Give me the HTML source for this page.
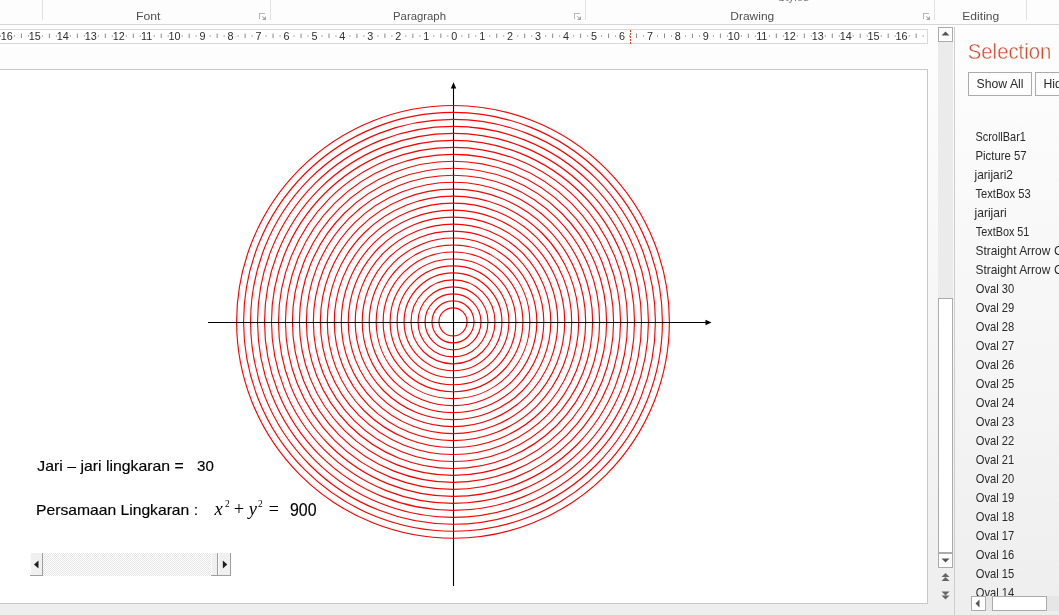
<!DOCTYPE html>
<html><head><meta charset="utf-8"><title>Selection</title>
<style>html,body{margin:0;padding:0;width:1059px;height:615px;overflow:hidden;background:#f5f5f5;font-family:"Liberation Sans",sans-serif;}</style>
</head><body>
<svg width="1059" height="615" viewBox="0 0 1059 615" style="display:block;will-change:transform"><defs><linearGradient id="bg" x1="0" y1="0" x2="0" y2="1"><stop offset="0" stop-color="#fefefe"/><stop offset="0.15" stop-color="#fcfcfc"/><stop offset="0.6" stop-color="#f5f5f5"/><stop offset="1" stop-color="#eeeeee"/></linearGradient></defs>
<rect x="0" y="0" width="1059" height="615" fill="url(#bg)"/>
<rect x="0" y="0" width="1059" height="24" fill="#fdfdfd"/>
<rect x="0" y="24" width="1059" height="1" fill="#d6d6d6"/>
<rect x="42" y="0" width="1" height="20" fill="#e2e2e2"/>
<rect x="270" y="0" width="1" height="20" fill="#e2e2e2"/>
<rect x="585" y="0" width="1" height="20" fill="#e2e2e2"/>
<rect x="934" y="0" width="1" height="20" fill="#e2e2e2"/>
<rect x="1026" y="0" width="1" height="20" fill="#e2e2e2"/>
<text x="136.00" y="20.00" font-family='"Liberation Sans", sans-serif' font-size="11.80" fill="#4f4f4f" text-anchor="start" textLength="24.50" lengthAdjust="spacingAndGlyphs">Font</text>
<text x="393.00" y="20.00" font-family='"Liberation Sans", sans-serif' font-size="11.80" fill="#4f4f4f" text-anchor="start" textLength="53.00" lengthAdjust="spacingAndGlyphs">Paragraph</text>
<text x="730.30" y="20.00" font-family='"Liberation Sans", sans-serif' font-size="11.80" fill="#4f4f4f" text-anchor="start" textLength="44.00" lengthAdjust="spacingAndGlyphs">Drawing</text>
<text x="962.30" y="20.00" font-family='"Liberation Sans", sans-serif' font-size="11.80" fill="#4f4f4f" text-anchor="start" textLength="37.00" lengthAdjust="spacingAndGlyphs">Editing</text>
<text x="777.50" y="1.00" font-family='"Liberation Sans", sans-serif' font-size="11.80" fill="#7a7a7a" text-anchor="start" textLength="31.50" lengthAdjust="spacingAndGlyphs">Styles</text>
<rect x="259" y="13" width="6" height="1" fill="#b8b8b8"/>
<rect x="259" y="13" width="1" height="6" fill="#b8b8b8"/>
<path d="M266 16 L266 20 L262 20 Z" fill="#a8a8a8"/>
<rect x="262" y="16" width="1" height="1" fill="#b8b8b8"/>
<rect x="263" y="17" width="1" height="1" fill="#b0b0b0"/>
<rect x="574" y="13" width="6" height="1" fill="#b8b8b8"/>
<rect x="574" y="13" width="1" height="6" fill="#b8b8b8"/>
<path d="M581 16 L581 20 L577 20 Z" fill="#a8a8a8"/>
<rect x="577" y="16" width="1" height="1" fill="#b8b8b8"/>
<rect x="578" y="17" width="1" height="1" fill="#b0b0b0"/>
<rect x="923" y="13" width="6" height="1" fill="#b8b8b8"/>
<rect x="923" y="13" width="1" height="6" fill="#b8b8b8"/>
<path d="M930 16 L930 20 L926 20 Z" fill="#a8a8a8"/>
<rect x="926" y="16" width="1" height="1" fill="#b8b8b8"/>
<rect x="927" y="17" width="1" height="1" fill="#b0b0b0"/>
<rect x="-1.5" y="29.5" width="929" height="14" fill="#ffffff" stroke="#d8d8d8" stroke-width="1"/>
<text x="6.84" y="40" font-family='"Liberation Sans", sans-serif' font-size="10.8" fill="#2e2e2e" text-anchor="middle">16</text>
<text x="34.80" y="40" font-family='"Liberation Sans", sans-serif' font-size="10.8" fill="#2e2e2e" text-anchor="middle">15</text>
<text x="62.76" y="40" font-family='"Liberation Sans", sans-serif' font-size="10.8" fill="#2e2e2e" text-anchor="middle">14</text>
<text x="90.72" y="40" font-family='"Liberation Sans", sans-serif' font-size="10.8" fill="#2e2e2e" text-anchor="middle">13</text>
<text x="118.68" y="40" font-family='"Liberation Sans", sans-serif' font-size="10.8" fill="#2e2e2e" text-anchor="middle">12</text>
<text x="146.64" y="40" font-family='"Liberation Sans", sans-serif' font-size="10.8" fill="#2e2e2e" text-anchor="middle">11</text>
<text x="174.60" y="40" font-family='"Liberation Sans", sans-serif' font-size="10.8" fill="#2e2e2e" text-anchor="middle">10</text>
<text x="202.56" y="40" font-family='"Liberation Sans", sans-serif' font-size="10.8" fill="#2e2e2e" text-anchor="middle">9</text>
<text x="230.52" y="40" font-family='"Liberation Sans", sans-serif' font-size="10.8" fill="#2e2e2e" text-anchor="middle">8</text>
<text x="258.48" y="40" font-family='"Liberation Sans", sans-serif' font-size="10.8" fill="#2e2e2e" text-anchor="middle">7</text>
<text x="286.44" y="40" font-family='"Liberation Sans", sans-serif' font-size="10.8" fill="#2e2e2e" text-anchor="middle">6</text>
<text x="314.40" y="40" font-family='"Liberation Sans", sans-serif' font-size="10.8" fill="#2e2e2e" text-anchor="middle">5</text>
<text x="342.36" y="40" font-family='"Liberation Sans", sans-serif' font-size="10.8" fill="#2e2e2e" text-anchor="middle">4</text>
<text x="370.32" y="40" font-family='"Liberation Sans", sans-serif' font-size="10.8" fill="#2e2e2e" text-anchor="middle">3</text>
<text x="398.28" y="40" font-family='"Liberation Sans", sans-serif' font-size="10.8" fill="#2e2e2e" text-anchor="middle">2</text>
<text x="426.24" y="40" font-family='"Liberation Sans", sans-serif' font-size="10.8" fill="#2e2e2e" text-anchor="middle">1</text>
<text x="454.20" y="40" font-family='"Liberation Sans", sans-serif' font-size="10.8" fill="#2e2e2e" text-anchor="middle">0</text>
<text x="482.16" y="40" font-family='"Liberation Sans", sans-serif' font-size="10.8" fill="#2e2e2e" text-anchor="middle">1</text>
<text x="510.12" y="40" font-family='"Liberation Sans", sans-serif' font-size="10.8" fill="#2e2e2e" text-anchor="middle">2</text>
<text x="538.08" y="40" font-family='"Liberation Sans", sans-serif' font-size="10.8" fill="#2e2e2e" text-anchor="middle">3</text>
<text x="566.04" y="40" font-family='"Liberation Sans", sans-serif' font-size="10.8" fill="#2e2e2e" text-anchor="middle">4</text>
<text x="594.00" y="40" font-family='"Liberation Sans", sans-serif' font-size="10.8" fill="#2e2e2e" text-anchor="middle">5</text>
<text x="621.96" y="40" font-family='"Liberation Sans", sans-serif' font-size="10.8" fill="#2e2e2e" text-anchor="middle">6</text>
<text x="649.92" y="40" font-family='"Liberation Sans", sans-serif' font-size="10.8" fill="#2e2e2e" text-anchor="middle">7</text>
<text x="677.88" y="40" font-family='"Liberation Sans", sans-serif' font-size="10.8" fill="#2e2e2e" text-anchor="middle">8</text>
<text x="705.84" y="40" font-family='"Liberation Sans", sans-serif' font-size="10.8" fill="#2e2e2e" text-anchor="middle">9</text>
<text x="733.80" y="40" font-family='"Liberation Sans", sans-serif' font-size="10.8" fill="#2e2e2e" text-anchor="middle">10</text>
<text x="761.76" y="40" font-family='"Liberation Sans", sans-serif' font-size="10.8" fill="#2e2e2e" text-anchor="middle">11</text>
<text x="789.72" y="40" font-family='"Liberation Sans", sans-serif' font-size="10.8" fill="#2e2e2e" text-anchor="middle">12</text>
<text x="817.68" y="40" font-family='"Liberation Sans", sans-serif' font-size="10.8" fill="#2e2e2e" text-anchor="middle">13</text>
<text x="845.64" y="40" font-family='"Liberation Sans", sans-serif' font-size="10.8" fill="#2e2e2e" text-anchor="middle">14</text>
<text x="873.60" y="40" font-family='"Liberation Sans", sans-serif' font-size="10.8" fill="#2e2e2e" text-anchor="middle">15</text>
<text x="901.56" y="40" font-family='"Liberation Sans", sans-serif' font-size="10.8" fill="#2e2e2e" text-anchor="middle">16</text>
<rect x="-0.05" y="35" width="1" height="2" fill="#b0b0b0"/>
<rect x="13.93" y="35" width="1" height="2" fill="#b0b0b0"/>
<rect x="20.92" y="33.5" width="1" height="4.5" fill="#8a8a8a"/>
<rect x="27.91" y="35" width="1" height="2" fill="#b0b0b0"/>
<rect x="41.89" y="35" width="1" height="2" fill="#b0b0b0"/>
<rect x="48.88" y="33.5" width="1" height="4.5" fill="#8a8a8a"/>
<rect x="55.87" y="35" width="1" height="2" fill="#b0b0b0"/>
<rect x="69.85" y="35" width="1" height="2" fill="#b0b0b0"/>
<rect x="76.84" y="33.5" width="1" height="4.5" fill="#8a8a8a"/>
<rect x="83.83" y="35" width="1" height="2" fill="#b0b0b0"/>
<rect x="97.81" y="35" width="1" height="2" fill="#b0b0b0"/>
<rect x="104.80" y="33.5" width="1" height="4.5" fill="#8a8a8a"/>
<rect x="111.79" y="35" width="1" height="2" fill="#b0b0b0"/>
<rect x="125.77" y="35" width="1" height="2" fill="#b0b0b0"/>
<rect x="132.76" y="33.5" width="1" height="4.5" fill="#8a8a8a"/>
<rect x="139.75" y="35" width="1" height="2" fill="#b0b0b0"/>
<rect x="153.73" y="35" width="1" height="2" fill="#b0b0b0"/>
<rect x="160.72" y="33.5" width="1" height="4.5" fill="#8a8a8a"/>
<rect x="167.71" y="35" width="1" height="2" fill="#b0b0b0"/>
<rect x="181.69" y="35" width="1" height="2" fill="#b0b0b0"/>
<rect x="188.68" y="33.5" width="1" height="4.5" fill="#8a8a8a"/>
<rect x="195.67" y="35" width="1" height="2" fill="#b0b0b0"/>
<rect x="209.65" y="35" width="1" height="2" fill="#b0b0b0"/>
<rect x="216.64" y="33.5" width="1" height="4.5" fill="#8a8a8a"/>
<rect x="223.63" y="35" width="1" height="2" fill="#b0b0b0"/>
<rect x="237.61" y="35" width="1" height="2" fill="#b0b0b0"/>
<rect x="244.60" y="33.5" width="1" height="4.5" fill="#8a8a8a"/>
<rect x="251.59" y="35" width="1" height="2" fill="#b0b0b0"/>
<rect x="265.57" y="35" width="1" height="2" fill="#b0b0b0"/>
<rect x="272.56" y="33.5" width="1" height="4.5" fill="#8a8a8a"/>
<rect x="279.55" y="35" width="1" height="2" fill="#b0b0b0"/>
<rect x="293.53" y="35" width="1" height="2" fill="#b0b0b0"/>
<rect x="300.52" y="33.5" width="1" height="4.5" fill="#8a8a8a"/>
<rect x="307.51" y="35" width="1" height="2" fill="#b0b0b0"/>
<rect x="321.49" y="35" width="1" height="2" fill="#b0b0b0"/>
<rect x="328.48" y="33.5" width="1" height="4.5" fill="#8a8a8a"/>
<rect x="335.47" y="35" width="1" height="2" fill="#b0b0b0"/>
<rect x="349.45" y="35" width="1" height="2" fill="#b0b0b0"/>
<rect x="356.44" y="33.5" width="1" height="4.5" fill="#8a8a8a"/>
<rect x="363.43" y="35" width="1" height="2" fill="#b0b0b0"/>
<rect x="377.41" y="35" width="1" height="2" fill="#b0b0b0"/>
<rect x="384.40" y="33.5" width="1" height="4.5" fill="#8a8a8a"/>
<rect x="391.39" y="35" width="1" height="2" fill="#b0b0b0"/>
<rect x="405.37" y="35" width="1" height="2" fill="#b0b0b0"/>
<rect x="412.36" y="33.5" width="1" height="4.5" fill="#8a8a8a"/>
<rect x="419.35" y="35" width="1" height="2" fill="#b0b0b0"/>
<rect x="433.33" y="35" width="1" height="2" fill="#b0b0b0"/>
<rect x="440.32" y="33.5" width="1" height="4.5" fill="#8a8a8a"/>
<rect x="447.31" y="35" width="1" height="2" fill="#b0b0b0"/>
<rect x="461.29" y="35" width="1" height="2" fill="#b0b0b0"/>
<rect x="468.28" y="33.5" width="1" height="4.5" fill="#8a8a8a"/>
<rect x="475.27" y="35" width="1" height="2" fill="#b0b0b0"/>
<rect x="489.25" y="35" width="1" height="2" fill="#b0b0b0"/>
<rect x="496.24" y="33.5" width="1" height="4.5" fill="#8a8a8a"/>
<rect x="503.23" y="35" width="1" height="2" fill="#b0b0b0"/>
<rect x="517.21" y="35" width="1" height="2" fill="#b0b0b0"/>
<rect x="524.20" y="33.5" width="1" height="4.5" fill="#8a8a8a"/>
<rect x="531.19" y="35" width="1" height="2" fill="#b0b0b0"/>
<rect x="545.17" y="35" width="1" height="2" fill="#b0b0b0"/>
<rect x="552.16" y="33.5" width="1" height="4.5" fill="#8a8a8a"/>
<rect x="559.15" y="35" width="1" height="2" fill="#b0b0b0"/>
<rect x="573.13" y="35" width="1" height="2" fill="#b0b0b0"/>
<rect x="580.12" y="33.5" width="1" height="4.5" fill="#8a8a8a"/>
<rect x="587.11" y="35" width="1" height="2" fill="#b0b0b0"/>
<rect x="601.09" y="35" width="1" height="2" fill="#b0b0b0"/>
<rect x="608.08" y="33.5" width="1" height="4.5" fill="#8a8a8a"/>
<rect x="615.07" y="35" width="1" height="2" fill="#b0b0b0"/>
<rect x="629.05" y="35" width="1" height="2" fill="#b0b0b0"/>
<rect x="636.04" y="33.5" width="1" height="4.5" fill="#8a8a8a"/>
<rect x="643.03" y="35" width="1" height="2" fill="#b0b0b0"/>
<rect x="657.01" y="35" width="1" height="2" fill="#b0b0b0"/>
<rect x="664.00" y="33.5" width="1" height="4.5" fill="#8a8a8a"/>
<rect x="670.99" y="35" width="1" height="2" fill="#b0b0b0"/>
<rect x="684.97" y="35" width="1" height="2" fill="#b0b0b0"/>
<rect x="691.96" y="33.5" width="1" height="4.5" fill="#8a8a8a"/>
<rect x="698.95" y="35" width="1" height="2" fill="#b0b0b0"/>
<rect x="712.93" y="35" width="1" height="2" fill="#b0b0b0"/>
<rect x="719.92" y="33.5" width="1" height="4.5" fill="#8a8a8a"/>
<rect x="726.91" y="35" width="1" height="2" fill="#b0b0b0"/>
<rect x="740.89" y="35" width="1" height="2" fill="#b0b0b0"/>
<rect x="747.88" y="33.5" width="1" height="4.5" fill="#8a8a8a"/>
<rect x="754.87" y="35" width="1" height="2" fill="#b0b0b0"/>
<rect x="768.85" y="35" width="1" height="2" fill="#b0b0b0"/>
<rect x="775.84" y="33.5" width="1" height="4.5" fill="#8a8a8a"/>
<rect x="782.83" y="35" width="1" height="2" fill="#b0b0b0"/>
<rect x="796.81" y="35" width="1" height="2" fill="#b0b0b0"/>
<rect x="803.80" y="33.5" width="1" height="4.5" fill="#8a8a8a"/>
<rect x="810.79" y="35" width="1" height="2" fill="#b0b0b0"/>
<rect x="824.77" y="35" width="1" height="2" fill="#b0b0b0"/>
<rect x="831.76" y="33.5" width="1" height="4.5" fill="#8a8a8a"/>
<rect x="838.75" y="35" width="1" height="2" fill="#b0b0b0"/>
<rect x="852.73" y="35" width="1" height="2" fill="#b0b0b0"/>
<rect x="859.72" y="33.5" width="1" height="4.5" fill="#8a8a8a"/>
<rect x="866.71" y="35" width="1" height="2" fill="#b0b0b0"/>
<rect x="880.69" y="35" width="1" height="2" fill="#b0b0b0"/>
<rect x="887.68" y="33.5" width="1" height="4.5" fill="#8a8a8a"/>
<rect x="894.67" y="35" width="1" height="2" fill="#b0b0b0"/>
<rect x="908.65" y="35" width="1" height="2" fill="#b0b0b0"/>
<rect x="915.64" y="33.5" width="1" height="4.5" fill="#8a8a8a"/>
<rect x="922.63" y="35" width="1" height="2" fill="#b0b0b0"/>
<rect x="630" y="30" width="1" height="2" fill="#e0461e"/>
<rect x="630" y="33" width="1" height="2" fill="#e0461e"/>
<rect x="630" y="36" width="1" height="2" fill="#e0461e"/>
<rect x="630" y="39" width="1" height="2" fill="#e0461e"/>
<rect x="630" y="42" width="1" height="2" fill="#e0461e"/>
<rect x="-2.5" y="69.5" width="930" height="534" fill="#ffffff" stroke="#c8c8c8" stroke-width="1"/>
<circle cx="453.00" cy="321.85" r="14.05" fill="none" stroke="#ff0000" stroke-width="1.15"/>
<circle cx="453.00" cy="321.85" r="21.03" fill="none" stroke="#ff0000" stroke-width="1.15"/>
<circle cx="453.00" cy="321.85" r="28.00" fill="none" stroke="#ff0000" stroke-width="1.15"/>
<circle cx="453.00" cy="321.85" r="34.98" fill="none" stroke="#ff0000" stroke-width="1.15"/>
<circle cx="453.00" cy="321.85" r="41.96" fill="none" stroke="#ff0000" stroke-width="1.15"/>
<circle cx="453.00" cy="321.85" r="48.94" fill="none" stroke="#ff0000" stroke-width="1.15"/>
<circle cx="453.00" cy="321.85" r="55.91" fill="none" stroke="#ff0000" stroke-width="1.15"/>
<circle cx="453.00" cy="321.85" r="62.89" fill="none" stroke="#ff0000" stroke-width="1.15"/>
<circle cx="453.00" cy="321.85" r="69.87" fill="none" stroke="#ff0000" stroke-width="1.15"/>
<circle cx="453.00" cy="321.85" r="76.84" fill="none" stroke="#ff0000" stroke-width="1.15"/>
<circle cx="453.00" cy="321.85" r="83.82" fill="none" stroke="#ff0000" stroke-width="1.15"/>
<circle cx="453.00" cy="321.85" r="90.80" fill="none" stroke="#ff0000" stroke-width="1.15"/>
<circle cx="453.00" cy="321.85" r="97.77" fill="none" stroke="#ff0000" stroke-width="1.15"/>
<circle cx="453.00" cy="321.85" r="104.75" fill="none" stroke="#ff0000" stroke-width="1.15"/>
<circle cx="453.00" cy="321.85" r="111.73" fill="none" stroke="#ff0000" stroke-width="1.15"/>
<circle cx="453.00" cy="321.85" r="118.70" fill="none" stroke="#ff0000" stroke-width="1.15"/>
<circle cx="453.00" cy="321.85" r="125.68" fill="none" stroke="#ff0000" stroke-width="1.15"/>
<circle cx="453.00" cy="321.85" r="132.66" fill="none" stroke="#ff0000" stroke-width="1.15"/>
<circle cx="453.00" cy="321.85" r="139.64" fill="none" stroke="#ff0000" stroke-width="1.15"/>
<circle cx="453.00" cy="321.85" r="146.61" fill="none" stroke="#ff0000" stroke-width="1.15"/>
<circle cx="453.00" cy="321.85" r="153.59" fill="none" stroke="#ff0000" stroke-width="1.15"/>
<circle cx="453.00" cy="321.85" r="160.57" fill="none" stroke="#ff0000" stroke-width="1.15"/>
<circle cx="453.00" cy="321.85" r="167.54" fill="none" stroke="#ff0000" stroke-width="1.15"/>
<circle cx="453.00" cy="321.85" r="174.52" fill="none" stroke="#ff0000" stroke-width="1.15"/>
<circle cx="453.00" cy="321.85" r="181.50" fill="none" stroke="#ff0000" stroke-width="1.15"/>
<circle cx="453.00" cy="321.85" r="188.48" fill="none" stroke="#ff0000" stroke-width="1.15"/>
<circle cx="453.00" cy="321.85" r="195.45" fill="none" stroke="#ff0000" stroke-width="1.15"/>
<circle cx="453.00" cy="321.85" r="202.43" fill="none" stroke="#ff0000" stroke-width="1.15"/>
<circle cx="453.00" cy="321.85" r="209.41" fill="none" stroke="#ff0000" stroke-width="1.15"/>
<circle cx="453.00" cy="321.85" r="216.38" fill="none" stroke="#ff0000" stroke-width="1.15"/>
<line x1="453.5" y1="87" x2="453.5" y2="586" stroke="#000" stroke-width="1.1"/>
<path d="M453.5 82.3 L450.8 88.5 L456.2 88.5 Z" fill="#000"/>
<line x1="208" y1="322.5" x2="707" y2="322.5" stroke="#000" stroke-width="1.1"/>
<path d="M711.5 322.5 L705.5 319.8 L705.5 325.2 Z" fill="#000"/>
<text x="37.30" y="470.80" font-family='"Liberation Sans", sans-serif' font-size="14.50" fill="#000000" text-anchor="start" stroke="#000000" stroke-width="0.15" textLength="146.50" lengthAdjust="spacingAndGlyphs">Jari – jari lingkaran =</text>
<text x="197.00" y="470.80" font-family='"Liberation Sans", sans-serif' font-size="14.50" fill="#000000" text-anchor="start" stroke="#000000" stroke-width="0.15" textLength="16.80" lengthAdjust="spacingAndGlyphs">30</text>
<text x="36.00" y="514.80" font-family='"Liberation Sans", sans-serif' font-size="14.50" fill="#000000" text-anchor="start" stroke="#000000" stroke-width="0.15" textLength="162.00" lengthAdjust="spacingAndGlyphs">Persamaan Lingkaran :</text>
<text x="214.50" y="514.60" font-family='"Liberation Serif", serif' font-size="18.50" fill="#000000" text-anchor="start" font-style="italic">x</text>
<text x="225.00" y="506.60" font-family='"Liberation Serif", serif' font-size="9.50" fill="#000000" text-anchor="start">2</text>
<text x="233.80" y="515.20" font-family='"Liberation Serif", serif' font-size="18.50" fill="#000000" text-anchor="start">+</text>
<text x="248.80" y="514.60" font-family='"Liberation Serif", serif' font-size="18.50" fill="#000000" text-anchor="start" font-style="italic">y</text>
<text x="258.00" y="506.60" font-family='"Liberation Serif", serif' font-size="9.50" fill="#000000" text-anchor="start">2</text>
<text x="268.80" y="515.00" font-family='"Liberation Serif", serif' font-size="18.00" fill="#000000" text-anchor="start">=</text>
<text x="290.00" y="515.80" font-family='"Liberation Sans", sans-serif' font-size="17.50" fill="#000000" text-anchor="start" stroke="#000000" stroke-width="0.15" textLength="26.50" lengthAdjust="spacingAndGlyphs">900</text>
<pattern id="chk" x="0" y="0" width="2" height="2" patternUnits="userSpaceOnUse"><rect width="2" height="2" fill="#ffffff"/><rect x="0" y="0" width="1" height="1" fill="#e6e6e6"/><rect x="1" y="1" width="1" height="1" fill="#e6e6e6"/></pattern>
<rect x="43" y="553" width="168" height="23" fill="url(#chk)"/>
<rect x="30" y="553" width="13" height="23" fill="#f0f0f0"/>
<rect x="30" y="553" width="1" height="22" fill="#fbfbfb"/>
<rect x="42" y="553" width="1" height="23" fill="#a0a0a0"/>
<rect x="30" y="575" width="13" height="1" fill="#a0a0a0"/>
<rect x="211" y="553" width="7" height="23" fill="#f0f0f0"/>
<rect x="211" y="553" width="1" height="22" fill="#fbfbfb"/>
<rect x="217" y="553" width="1" height="23" fill="#a0a0a0"/>
<rect x="211" y="575" width="7" height="1" fill="#a0a0a0"/>
<rect x="218" y="553" width="13" height="23" fill="#f0f0f0"/>
<rect x="218" y="553" width="1" height="22" fill="#fbfbfb"/>
<rect x="230" y="553" width="1" height="23" fill="#a0a0a0"/>
<rect x="218" y="575" width="13" height="1" fill="#a0a0a0"/>
<path d="M34 564.5 L38.5 560.5 L38.5 568.5 Z" fill="#1e1e1e"/>
<path d="M227.3 564.5 L222.8 560.5 L222.8 568.5 Z" fill="#1e1e1e"/>
<rect x="938" y="27" width="15" height="541" fill="#ebebeb"/>
<rect x="938.5" y="27.5" width="14.0" height="14.0" fill="#ffffff" stroke="#ababab" stroke-width="1"/>
<path d="M945.5 31.5 L941.5 35.5 L949.5 35.5 Z" fill="#555"/>
<rect x="938.5" y="298.5" width="14.0" height="254.0" fill="#ffffff" stroke="#ababab" stroke-width="1"/>
<rect x="938.5" y="553.5" width="14.0" height="14.0" fill="#ffffff" stroke="#ababab" stroke-width="1"/>
<path d="M941.5 558.5 L949.5 558.5 L945.5 562.5 Z" fill="#555"/>
<path d="M945.5 573 L941.5 577 L949.5 577 Z M945.5 577 L941.5 581 L949.5 581 Z" fill="#666"/>
<path d="M941.5 591.5 L949.5 591.5 L945.5 595.5 Z M941.5 595.5 L949.5 595.5 L945.5 599.5 Z" fill="#666"/>
<rect x="954" y="27" width="1" height="588" fill="#cdcdcd"/>
<text x="967.8" y="58.9" font-family='"Liberation Sans", sans-serif' font-size="22" fill="#d54a2a" stroke="#fbfbfb" stroke-width="0.4" textLength="83.5" lengthAdjust="spacingAndGlyphs">Selection</text>
<rect x="968.5" y="72.5" width="63.0" height="23.0" fill="#fdfdfd" stroke="#ababab" stroke-width="1"/>
<text x="976.50" y="87.80" font-family='"Liberation Sans", sans-serif' font-size="12.20" fill="#2a2a2a" text-anchor="start" textLength="47.00" lengthAdjust="spacingAndGlyphs">Show All</text>
<rect x="1035.5" y="72.5" width="39.0" height="23.0" fill="#fdfdfd" stroke="#ababab" stroke-width="1"/>
<text x="1043.50" y="87.80" font-family='"Liberation Sans", sans-serif' font-size="12.20" fill="#2a2a2a" text-anchor="start">Hide All</text>
<clipPath id="lc"><rect x="955" y="100" width="104" height="496"/></clipPath>
<g clip-path="url(#lc)">
<text x="975.40" y="141.10" font-family='"Liberation Sans", sans-serif' font-size="12.20" fill="#2a2a2a" text-anchor="start" textLength="50.50" lengthAdjust="spacingAndGlyphs">ScrollBar1</text>
<text x="975.50" y="160.10" font-family='"Liberation Sans", sans-serif' font-size="12.20" fill="#2a2a2a" text-anchor="start" textLength="51.20" lengthAdjust="spacingAndGlyphs">Picture 57</text>
<text x="974.59" y="179.10" font-family='"Liberation Sans", sans-serif' font-size="12.20" fill="#2a2a2a" text-anchor="start" textLength="38.31" lengthAdjust="spacingAndGlyphs">jarijari2</text>
<text x="975.50" y="198.10" font-family='"Liberation Sans", sans-serif' font-size="12.20" fill="#2a2a2a" text-anchor="start" textLength="55.10" lengthAdjust="spacingAndGlyphs">TextBox 53</text>
<text x="974.60" y="217.10" font-family='"Liberation Sans", sans-serif' font-size="12.20" fill="#2a2a2a" text-anchor="start" textLength="32.00" lengthAdjust="spacingAndGlyphs">jarijari</text>
<text x="975.80" y="236.10" font-family='"Liberation Sans", sans-serif' font-size="12.20" fill="#2a2a2a" text-anchor="start" textLength="53.60" lengthAdjust="spacingAndGlyphs">TextBox 51</text>
<text x="975.50" y="255.10" font-family='"Liberation Sans", sans-serif' font-size="12.20" fill="#2a2a2a" text-anchor="start" textLength="74.76" lengthAdjust="spacingAndGlyphs">Straight Arrow</text>
<text x="1054.00" y="255.10" font-family='"Liberation Sans", sans-serif' font-size="12.20" fill="#2a2a2a" text-anchor="start">C</text>
<text x="975.50" y="274.10" font-family='"Liberation Sans", sans-serif' font-size="12.20" fill="#2a2a2a" text-anchor="start" textLength="74.76" lengthAdjust="spacingAndGlyphs">Straight Arrow</text>
<text x="1054.00" y="274.10" font-family='"Liberation Sans", sans-serif' font-size="12.20" fill="#2a2a2a" text-anchor="start">C</text>
<text x="975.70" y="293.10" font-family='"Liberation Sans", sans-serif' font-size="12.20" fill="#2a2a2a" text-anchor="start" textLength="38.50" lengthAdjust="spacingAndGlyphs">Oval 30</text>
<text x="975.70" y="312.10" font-family='"Liberation Sans", sans-serif' font-size="12.20" fill="#2a2a2a" text-anchor="start" textLength="38.50" lengthAdjust="spacingAndGlyphs">Oval 29</text>
<text x="975.70" y="331.10" font-family='"Liberation Sans", sans-serif' font-size="12.20" fill="#2a2a2a" text-anchor="start" textLength="38.50" lengthAdjust="spacingAndGlyphs">Oval 28</text>
<text x="975.70" y="350.10" font-family='"Liberation Sans", sans-serif' font-size="12.20" fill="#2a2a2a" text-anchor="start" textLength="38.50" lengthAdjust="spacingAndGlyphs">Oval 27</text>
<text x="975.70" y="369.10" font-family='"Liberation Sans", sans-serif' font-size="12.20" fill="#2a2a2a" text-anchor="start" textLength="38.50" lengthAdjust="spacingAndGlyphs">Oval 26</text>
<text x="975.70" y="388.10" font-family='"Liberation Sans", sans-serif' font-size="12.20" fill="#2a2a2a" text-anchor="start" textLength="38.50" lengthAdjust="spacingAndGlyphs">Oval 25</text>
<text x="975.70" y="407.10" font-family='"Liberation Sans", sans-serif' font-size="12.20" fill="#2a2a2a" text-anchor="start" textLength="38.50" lengthAdjust="spacingAndGlyphs">Oval 24</text>
<text x="975.70" y="426.10" font-family='"Liberation Sans", sans-serif' font-size="12.20" fill="#2a2a2a" text-anchor="start" textLength="38.50" lengthAdjust="spacingAndGlyphs">Oval 23</text>
<text x="975.70" y="445.10" font-family='"Liberation Sans", sans-serif' font-size="12.20" fill="#2a2a2a" text-anchor="start" textLength="38.50" lengthAdjust="spacingAndGlyphs">Oval 22</text>
<text x="975.70" y="464.10" font-family='"Liberation Sans", sans-serif' font-size="12.20" fill="#2a2a2a" text-anchor="start" textLength="38.50" lengthAdjust="spacingAndGlyphs">Oval 21</text>
<text x="975.70" y="483.10" font-family='"Liberation Sans", sans-serif' font-size="12.20" fill="#2a2a2a" text-anchor="start" textLength="38.50" lengthAdjust="spacingAndGlyphs">Oval 20</text>
<text x="975.70" y="502.10" font-family='"Liberation Sans", sans-serif' font-size="12.20" fill="#2a2a2a" text-anchor="start" textLength="38.50" lengthAdjust="spacingAndGlyphs">Oval 19</text>
<text x="975.70" y="521.10" font-family='"Liberation Sans", sans-serif' font-size="12.20" fill="#2a2a2a" text-anchor="start" textLength="38.50" lengthAdjust="spacingAndGlyphs">Oval 18</text>
<text x="975.70" y="540.10" font-family='"Liberation Sans", sans-serif' font-size="12.20" fill="#2a2a2a" text-anchor="start" textLength="38.50" lengthAdjust="spacingAndGlyphs">Oval 17</text>
<text x="975.70" y="559.10" font-family='"Liberation Sans", sans-serif' font-size="12.20" fill="#2a2a2a" text-anchor="start" textLength="38.50" lengthAdjust="spacingAndGlyphs">Oval 16</text>
<text x="975.70" y="578.10" font-family='"Liberation Sans", sans-serif' font-size="12.20" fill="#2a2a2a" text-anchor="start" textLength="38.50" lengthAdjust="spacingAndGlyphs">Oval 15</text>
<text x="975.70" y="597.10" font-family='"Liberation Sans", sans-serif' font-size="12.20" fill="#2a2a2a" text-anchor="start" textLength="38.50" lengthAdjust="spacingAndGlyphs">Oval 14</text>
</g>
<rect x="971" y="596" width="88" height="15" fill="#e6e6e6"/>
<rect x="971.5" y="596.5" width="14.0" height="14.0" fill="#ffffff" stroke="#ababab" stroke-width="1"/>
<path d="M975.5 603.5 L979.5 599.5 L979.5 607.5 Z" fill="#555"/>
<rect x="992.5" y="596.5" width="54.0" height="14.0" fill="#ffffff" stroke="#ababab" stroke-width="1"/></svg>
</body></html>
